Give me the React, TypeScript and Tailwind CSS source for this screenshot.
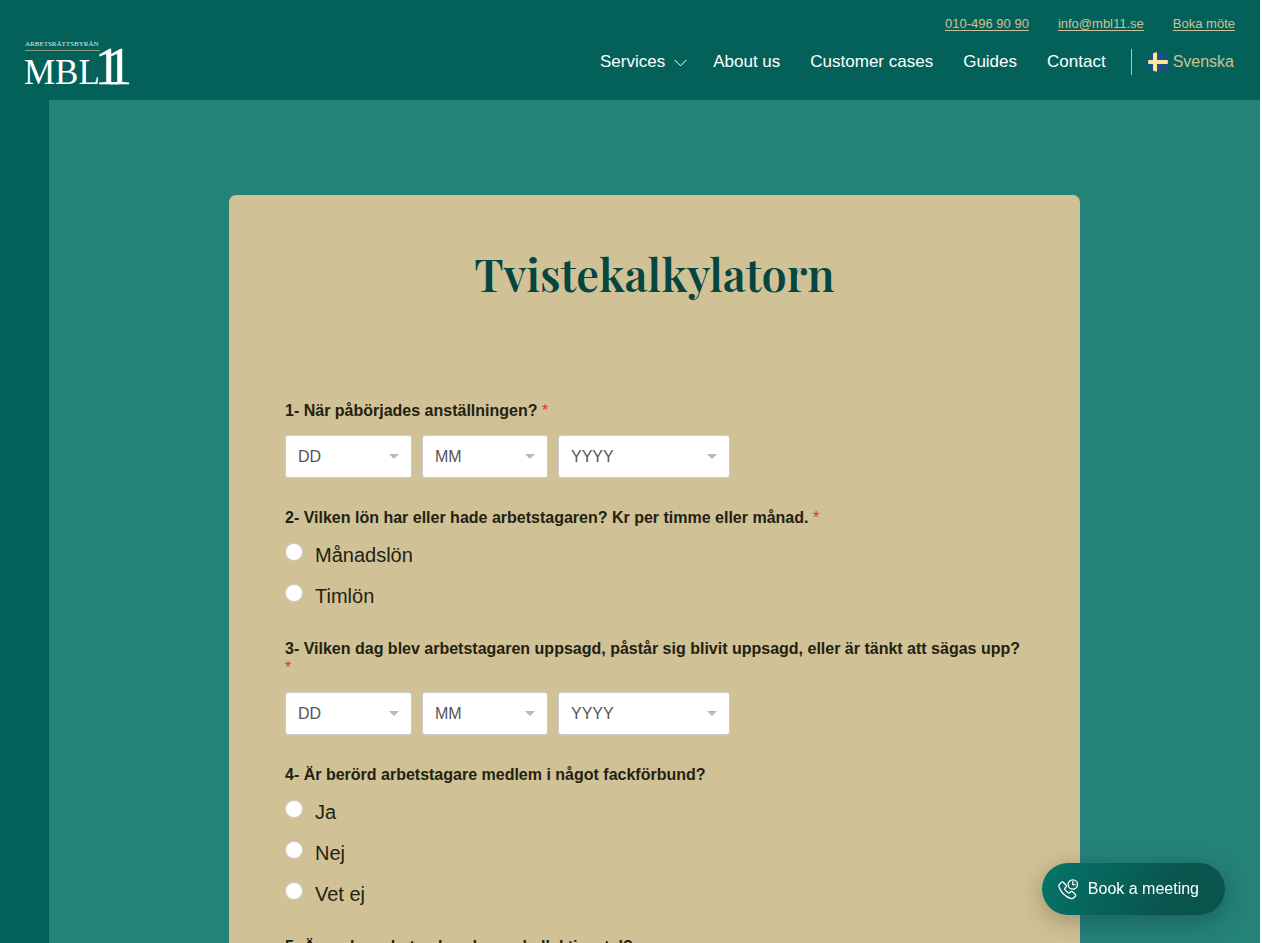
import React from "react";

function Logo() {
  return (
    <svg width="106" height="52" viewBox="0 0 106 52" overflow="visible" role="img" aria-label="Arbetsrättsbyrån MBL 11">
      <g fill="#ffffff" fontFamily="'Liberation Serif', serif">
        <text x="1" y="9" fontSize="7" fillOpacity="0.9">ARBETSRÄTTSBYRÅN</text>
        <rect x="1" y="13" width="75" height="1" fill="#8b9a70" />
        <text x="0" y="47" fontSize="35">MBL</text>
        <text x="71 82" y="47" fontSize="52" stroke="#ffffff" strokeWidth="0.5">11</text>
      </g>
    </svg>
  );
}

function SwedishFlag() {
  return (
    <svg width="20" height="20" viewBox="0 0 20 20" aria-hidden="true">
      <defs>
        <clipPath id="flag-round">
          <circle cx="10" cy="10" r="10" />
        </clipPath>
      </defs>
      <g clipPath="url(#flag-round)">
        <rect width="20" height="20" fill="#204f88" />
        <rect x="5" width="4" height="20" fill="#ffe49a" />
        <rect y="8" width="20" height="4" fill="#ffe49a" />
      </g>
    </svg>
  );
}

function PhoneClock() {
  return (
    <svg width="20" height="21" viewBox="0 0 20 21" fill="none" stroke="#ffffff" strokeWidth="1.3" strokeLinecap="round" strokeLinejoin="round" aria-hidden="true">
      <circle cx="14.8" cy="5.5" r="4.7" />
      <path d="M14.8 2.7v3h2.3" />
      <path d="M5.300 3.300 8 6.200c.6.700.6 1.300 0 1.900l-.9.900c-.5.500-.5 1-.1 1.600.9 1.300 1.900 2.300 3.100 3.200.6.400 1.100.4 1.600-.1l.9-.9c.6-.6 1.200-.6 1.900 0l2.700 2.500c.7.700.7 1.300.1 1.900l-1.500 1.600c-.8.800-1.700 1.100-2.700.8-2.600-.7-5.200-2.200-7.600-4.600C3.100 12.600 1.500 10.100.9 7.700.7 6.700.9 5.800 1.700 5l1.600-1.600c.7-.7 1.300-.7 2-.1Z" />
    </svg>
  );
}

const navLinks = ["About us", "Customer cases", "Guides", "Contact"];

function Header() {
  return (
    <header className="flex h-[100px] items-start justify-between bg-[#036159] pl-6 pr-[25px]">
      <a href="#" className="pt-[37px]">
        <Logo />
      </a>
      <div className="flex flex-col items-end">
        <div className="flex gap-[29px] pt-4 text-[13px] leading-4 text-[#d0c095]">
          <a href="tel:0104969090" className="underline underline-offset-2">010-496 90 90</a>
          <a href="mailto:info@mbl11.se" className="underline underline-offset-2">info@mbl11.se</a>
          <a href="#" className="underline underline-offset-2">Boka möte</a>
        </div>
        <nav className="flex items-center gap-[30px] pr-px pt-[17px] text-[17px] leading-[26px] text-white">
          <a href="#" className="-mr-1 flex items-center gap-[9px]">
            Services
            <svg width="13" height="8" viewBox="0 0 13 8" fill="none" stroke="#ffffff" strokeWidth="1" aria-hidden="true" className="mt-0.5">
              <path d="m.5.8 6 6 6-6" />
            </svg>
          </a>
          {navLinks.map((label) => (
            <a key={label} href="#">{label}</a>
          ))}
          <a href="#" className="-ml-[5px] flex items-center gap-[5px] border-l border-[#d0c095] pl-4 text-[16px] text-[#d0c095]">
            <SwedishFlag />
            Svenska
          </a>
        </nav>
      </div>
    </header>
  );
}

function Required() {
  return <span className="font-normal text-[#d63637]">*</span>;
}

const unitWidths: Record<string, string> = {
  DD: "relative w-[127px]",
  MM: "relative w-[126px]",
  YYYY: "relative w-[172px]",
};

function DateSelect({ name, unit }: { name: string; unit: string }) {
  return (
    <div className={unitWidths[unit]}>
      <select
        name={name + unit}
        aria-label={unit}
        className="h-[43px] w-full appearance-none rounded-[3px] border border-[#cccccc] bg-white px-3 text-[16px] text-[#555555]"
      >
        <option>{unit}</option>
      </select>
      <svg width="10" height="5" viewBox="0 0 10 5" aria-hidden="true" className="pointer-events-none absolute right-[13px] top-[19px]">
        <path d="M0 0h10L5 5Z" fill="#b8b8b8" />
      </svg>
    </div>
  );
}

type FieldProps = {
  name: string;
  question: string;
  required?: boolean;
  options?: string[];
};

function Field({ name, question, required, options }: FieldProps) {
  return (
    <fieldset className="min-w-0">
      <legend className="mb-[15px] text-[16px] font-bold leading-[19px]">
        {question} {required && <Required />}
      </legend>
      {options ? (
        <div className="flex flex-col gap-[15px]">
          {options.map((option) => (
            <label key={option} className="flex items-start gap-3 text-[20px] leading-[26px]">
              <input
                type="radio"
                name={name}
                className="mt-px size-[18px] appearance-none rounded-full border border-[#cccccc] bg-white checked:border-[5px] checked:border-[#036159]"
              />
              {option}
            </label>
          ))}
        </div>
      ) : (
        <div className="flex gap-[10px]">
          <DateSelect name={name} unit="DD" />
          <DateSelect name={name} unit="MM" />
          <DateSelect name={name} unit="YYYY" />
        </div>
      )}
    </fieldset>
  );
}

const fields: FieldProps[] = [
  { name: "start", question: "1- När påbörjades anställningen?", required: true },
  {
    name: "salary",
    question: "2- Vilken lön har eller hade arbetstagaren? Kr per timme eller månad.",
    required: true,
    options: ["Månadslön", "Timlön"],
  },
  {
    name: "notice",
    question: "3- Vilken dag blev arbetstagaren uppsagd, påstår sig blivit uppsagd, eller är tänkt att sägas upp?",
    required: true,
  },
  { name: "union", question: "4- Är berörd arbetstagare medlem i något fackförbund?", options: ["Ja", "Nej", "Vet ej"] },
  { name: "agreement", question: "5- Är verksamheten bunden av kollektivavtal?", options: ["Ja", "Nej", "Vet ej"] },
];

export default function App() {
  return (
    <div className="mr-[2px] min-h-screen bg-[#036159] font-['Liberation_Sans',Arial,sans-serif]">
      <Header />
      <main className="ml-[49px] bg-[#248279] px-[180px] py-[95px]">
        <form className="rounded-[7px] bg-[#d1c196] px-14 pb-14 pt-12 text-[#222211]">
          <h1 className="text-center font-['Playfair_Display','Liberation_Serif',serif] text-[45px] font-semibold leading-[60px] text-[#034740]">
            Tvistekalkylatorn
          </h1>
          <div className="flex flex-col gap-[30px] pt-[98px]">
            {fields.map((field) => (
              <Field key={field.name} {...field} />
            ))}
          </div>
        </form>
      </main>
      <button
        type="button"
        className="fixed bottom-7 right-[37px] flex h-[52px] items-center gap-[10px] rounded-full bg-linear-[120deg] from-[#04756a] to-[#0a544e] to-70% pl-4 pr-[26px] text-[16px] text-white shadow-[0_6px_24px_rgba(0,0,0,0.25)]"
      >
        <PhoneClock />
        Book a meeting
      </button>
    </div>
  );
}
